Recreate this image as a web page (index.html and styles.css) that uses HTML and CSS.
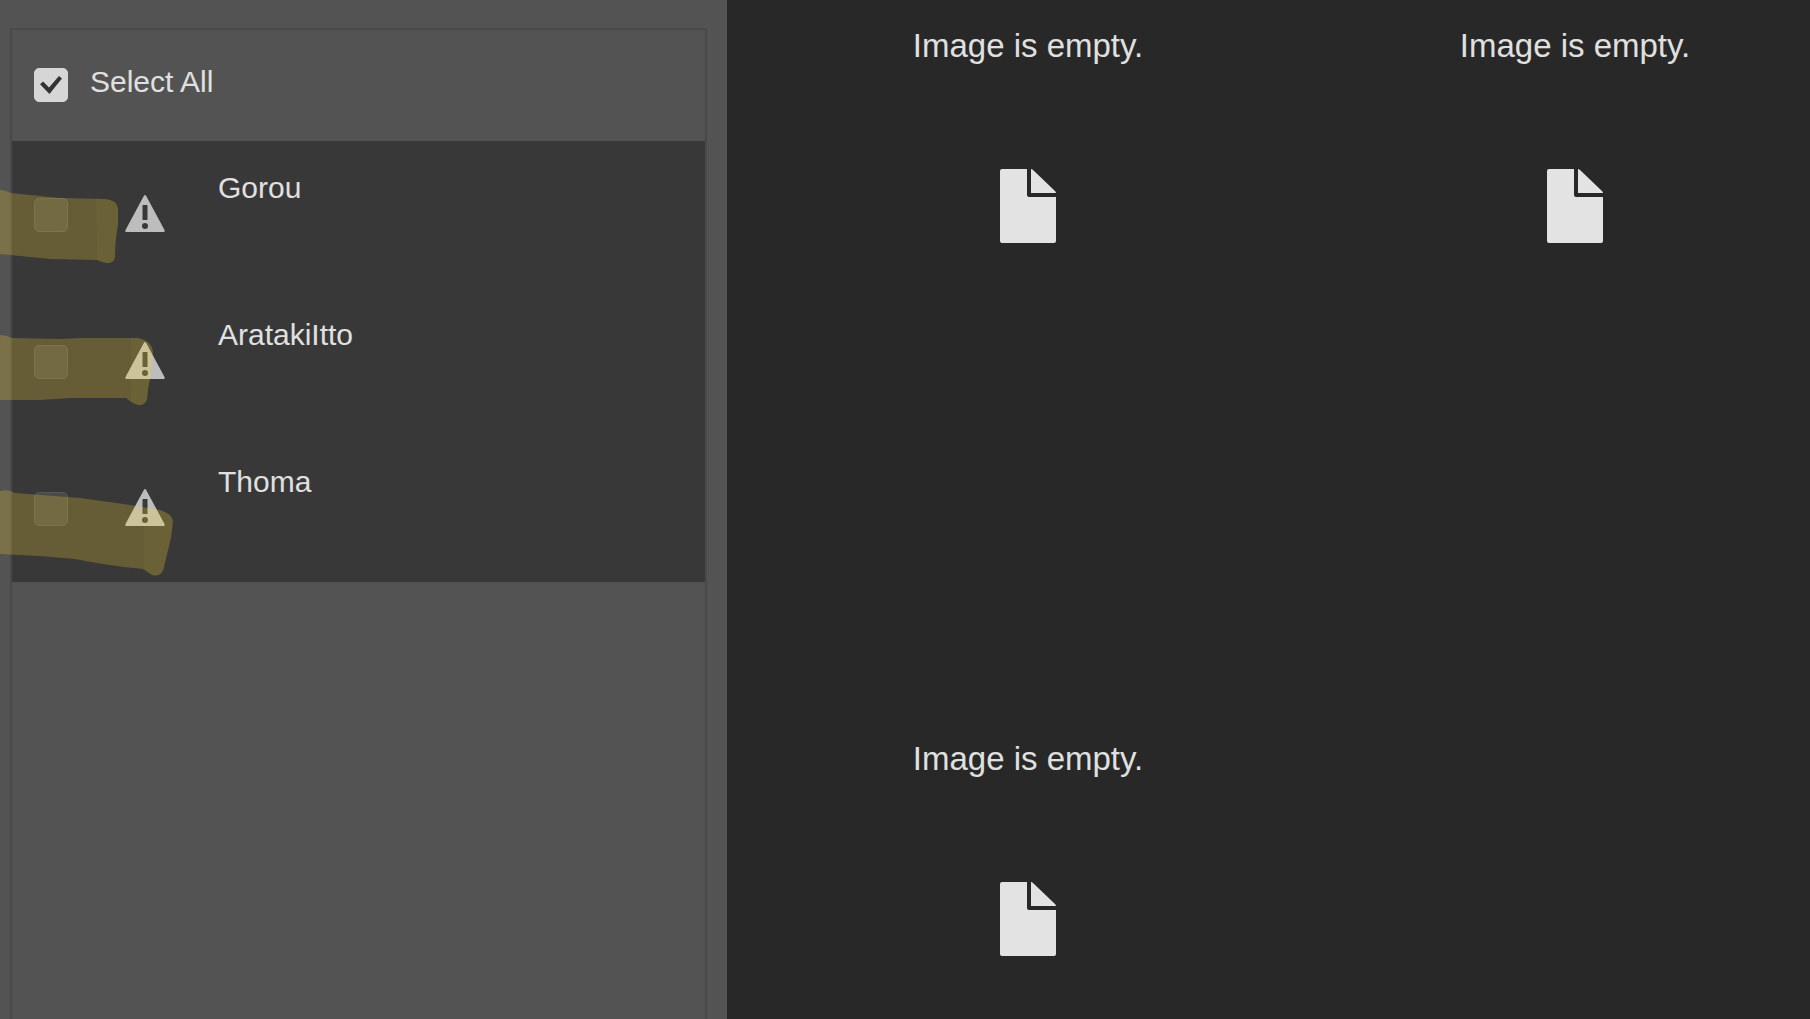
FILE: index.html
```html
<!DOCTYPE html>
<html lang="en">
<head>
<meta charset="utf-8">
<meta name="viewport" content="width=device-width, initial-scale=1">
<title>Image list</title>
<link rel="stylesheet" href="styles.css">
</head>
<body>
<svg class="symbols" aria-hidden="true">
  <symbol id="warning" viewBox="0 0 40 37">
    <path fill="#bdbdbd" fill-rule="evenodd" d="M18.800 1Q20 -1 21.200 1L39.500 35Q40.300 37 38.500 37H1.500Q-.3 37 .5 35ZM18 10Q17.500 10 17.500 10.500V24.500Q17.500 25 18 25H22Q22.500 25 22.500 24.500V10.500Q22.500 10 22 10ZM20 28A3 3 0 1 0 20 34A3 3 0 1 0 20 28Z"/>
  </symbol>
  <symbol id="document" viewBox="0 0 56 74">
    <path fill="#e3e3e3" d="M2 0H27V26Q27 28 29 28H56V72Q56 74 54 74H2Q0 74 0 72V2Q0 0 2 0ZM31 0Q32 0 33 1L55 22Q56 23 56 24H31Z"/>
  </symbol>
</svg>
<div class="app">
  <aside class="sidebar">
    <div class="panel">
      <div class="select-all">
        <input class="check" type="checkbox" id="select-all" checked>
        <label class="label" for="select-all">Select All</label>
      </div>
      <ul class="items">
        <li class="item">
          <input class="check" type="checkbox" id="gorou">
          <svg class="warning" role="img" aria-label="Warning"><use href="#warning"/></svg>
          <label class="label" for="gorou">Gorou</label>
        </li>
        <li class="item">
          <input class="check" type="checkbox" id="aratakiitto">
          <svg class="warning" role="img" aria-label="Warning"><use href="#warning"/></svg>
          <label class="label" for="aratakiitto">AratakiItto</label>
        </li>
        <li class="item">
          <input class="check" type="checkbox" id="thoma">
          <svg class="warning" role="img" aria-label="Warning"><use href="#warning"/></svg>
          <label class="label" for="thoma">Thoma</label>
        </li>
      </ul>
    </div>
    <svg class="marker" width="180" height="600" viewBox="0 0 180 600" aria-hidden="true">
      <g class="strokes">
        <path d="M0 190Q4 190 11 193L60 198L105 199Q117 200 118 208V225Q115 240 115 258Q113 264 106 263Q101 262 97 260L50 259L0 254Z"/>
        <path d="M0 335Q6 335 12 338L60 339L80 338H138Q152 341 153 352L151 374Q148 386 147 400Q144 406 138 405Q131 403 126 398H70L40 400H0Z"/>
        <path d="M0 491Q9 489 15 493L80 498Q120 503 160 510Q173 514 173 522L171 538L163 571Q159 577 152 575L143 569Q110 566 75 559L40 556L0 554Z"/>
      </g>
      <g class="caps">
        <path d="M96 199H106Q117 200 118 208V225Q115 240 115 258Q113 264 106 263Q101 262 97 260Z"/>
        <path d="M131 338H138Q152 341 153 352L151 374Q148 386 147 400Q144 406 138 405L131 402Z"/>
        <path d="M144 507L160 510Q173 514 173 522L171 538L163 571Q159 577 152 575L144 570Z"/>
      </g>
    </svg>
  </aside>
  <main class="gallery">
    <figure class="tile">
      <figcaption>Image is empty.</figcaption>
      <svg class="document" aria-hidden="true"><use href="#document"/></svg>
    </figure>
    <figure class="tile">
      <figcaption>Image is empty.</figcaption>
      <svg class="document" aria-hidden="true"><use href="#document"/></svg>
    </figure>
    <figure class="tile">
      <figcaption>Image is empty.</figcaption>
      <svg class="document" aria-hidden="true"><use href="#document"/></svg>
    </figure>
  </main>
</div>
</body>
</html>
```
FILE: styles.css
```css
* {
  box-sizing: border-box;
}

body {
  margin: 0;
  background: #282828;
  color: #e0e0e0;
  font-family: "Liberation Sans", Arial, sans-serif;
  font-size: 30px;
  line-height: 34px;
}

.symbols {
  display: none;
}

.app {
  display: flex;
  min-height: 100vh;
}

.sidebar {
  position: relative;
  display: flex;
  flex: 0 0 727px;
  padding: 28px 20px 0 10px;
  background: #535353;
}

.panel {
  flex: 1;
  border: 2px solid #494949;
  border-bottom: 0;
}

.select-all {
  display: flex;
  gap: 22px;
  padding: 35px 22px 39px;
}

.items {
  margin: 0;
  padding: 0;
  list-style: none;
  background: #383838;
}

.item {
  display: flex;
  padding: 30px 22px 0;
  height: 147px;
}

.check {
  appearance: none;
  flex: none;
  display: grid;
  place-items: center;
  width: 34px;
  height: 34px;
  margin: 3px 0 0;
  border: 1px solid #575757;
  border-radius: 5px;
  background: #4a4a4a;
}

.check:checked {
  border-color: #d6d6d6;
  background: #d6d6d6;
}

.check:checked::before {
  content: "";
  width: 22px;
  height: 18px;
  background: #333;
  clip-path: polygon(0 46%, 14% 30%, 41% 64%, 86% 0, 100% 14%, 43% 100%);
}

.item .check {
  margin-top: 27px;
}

.warning {
  flex: none;
  width: 40px;
  height: 37px;
  margin: 24px 53px 0 57px;
}

.marker {
  position: absolute;
  top: 0;
  left: 0;
  pointer-events: none;
}

.strokes {
  fill: rgb(255 218 50 / 23%);
}

.caps {
  fill: rgb(255 210 30 / 3%);
}

.gallery {
  flex: 1;
  display: grid;
  grid-template-columns: 1fr 1fr;
  align-content: start;
  gap: 497px 147px;
  padding: 27px 35px 60px 101px;
  font-size: 33px;
  line-height: 38px;
}

.tile {
  display: flex;
  flex-direction: column;
  align-items: center;
  gap: 104px;
  margin: 0;
}

.document {
  width: 56px;
  height: 74px;
}
```
